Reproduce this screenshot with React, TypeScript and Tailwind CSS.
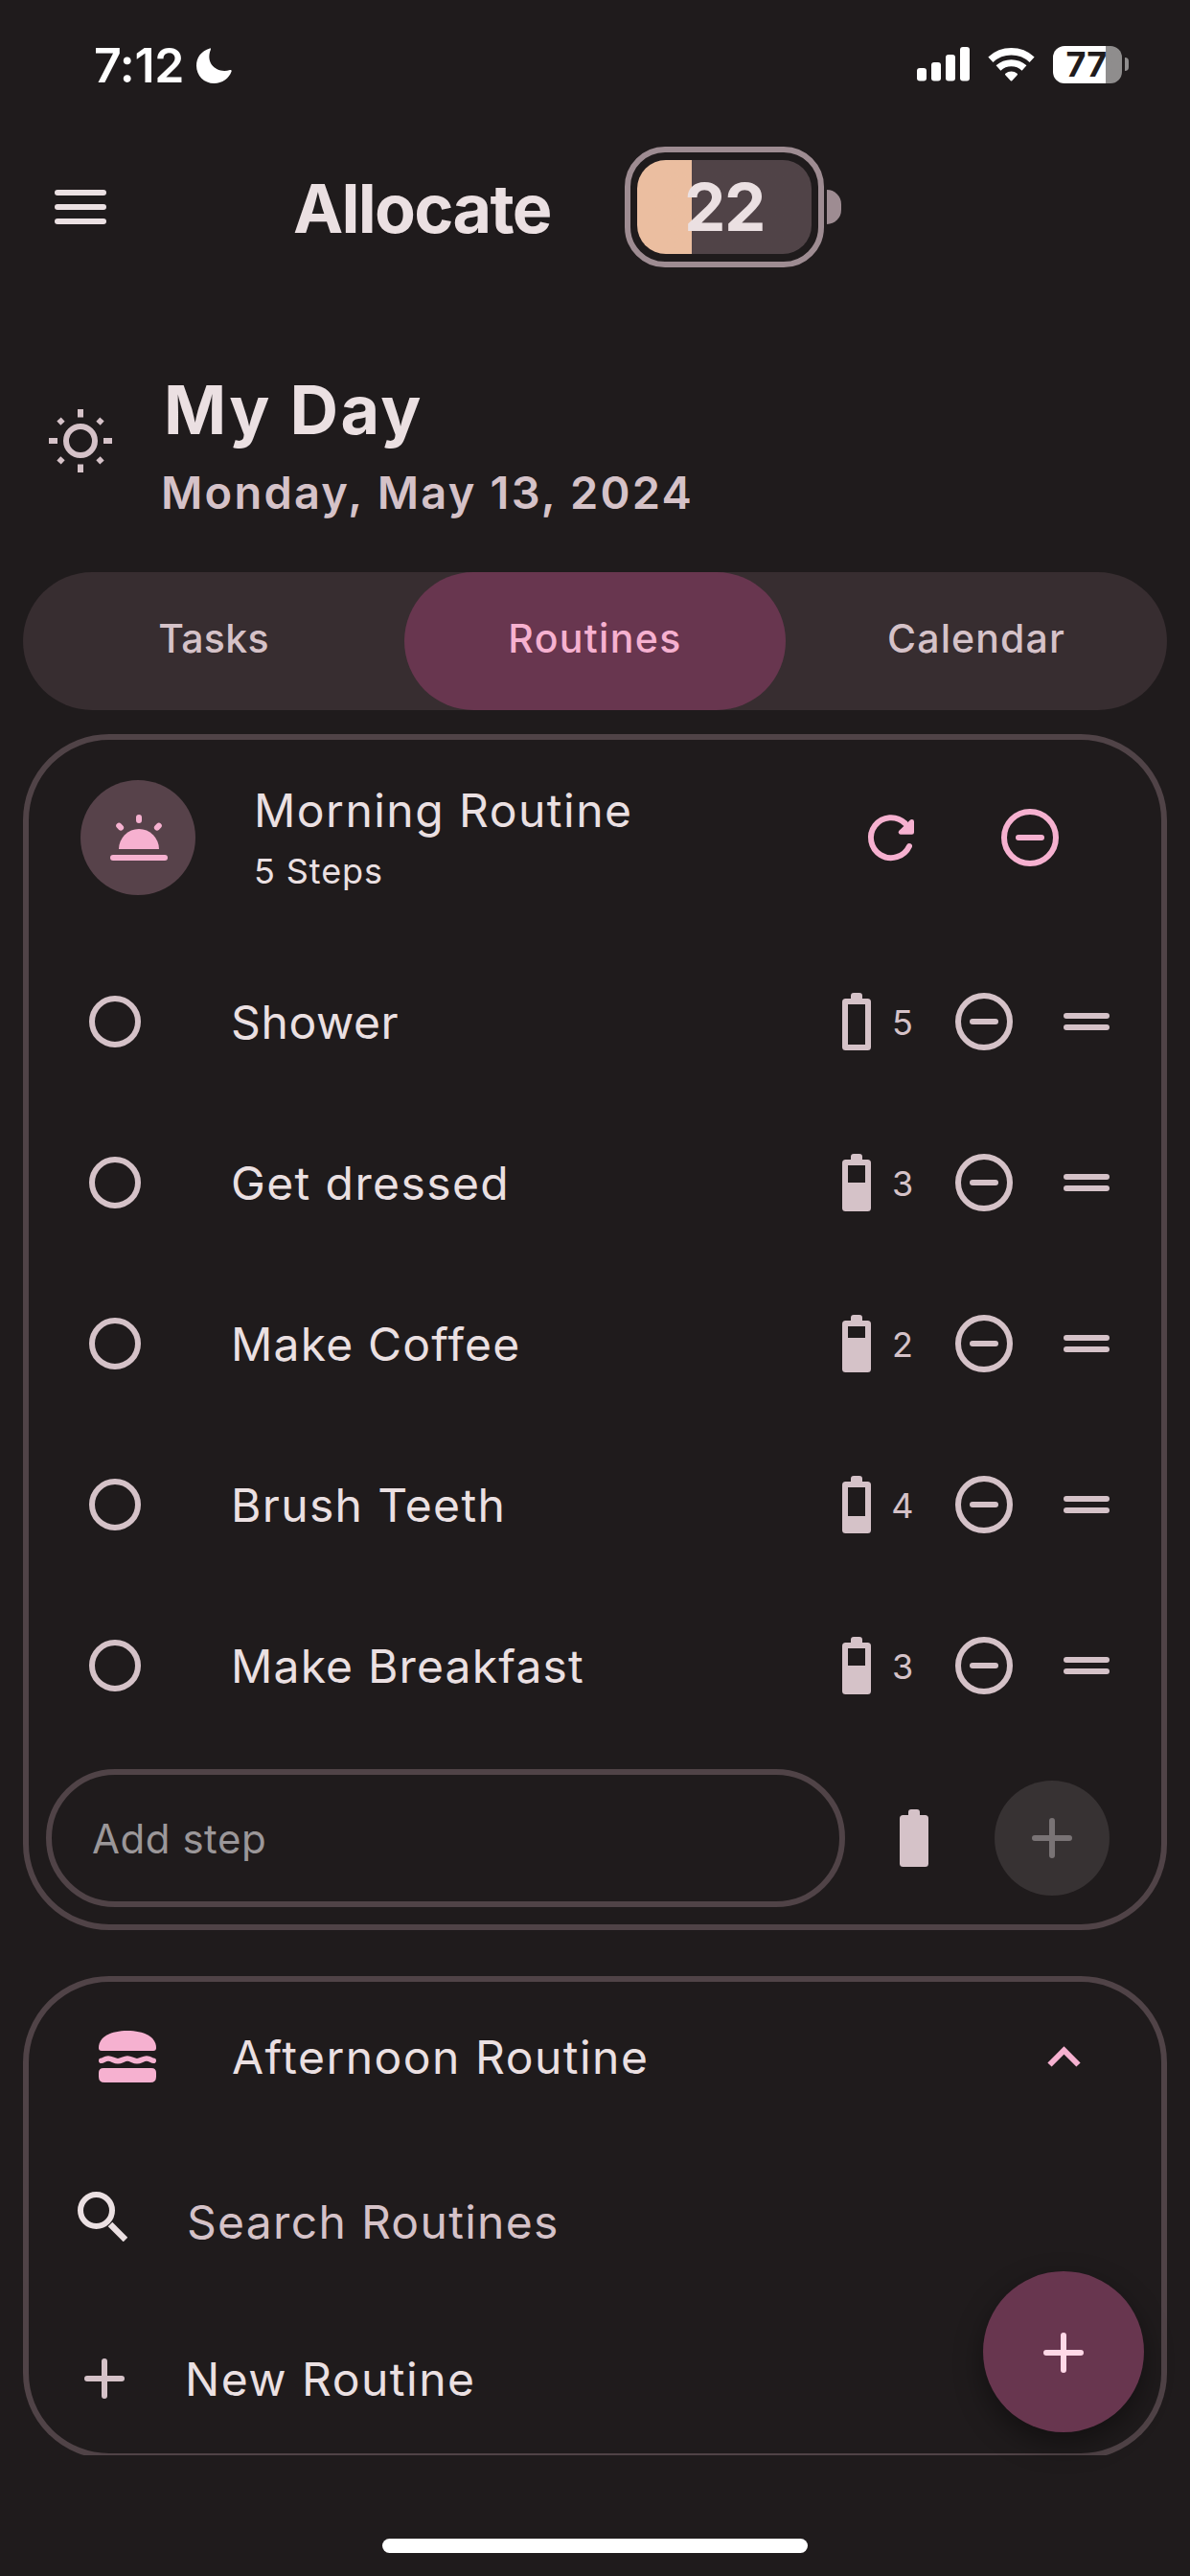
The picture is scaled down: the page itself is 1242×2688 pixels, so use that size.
import React from "react";

type Step = { label: string; tracking: string; energy: number; hollow: number };

const steps: Step[] = [
  { label: "Shower", tracking: "tracking-[0.6px]", energy: 5, hollow: 42 },
  { label: "Get dressed", tracking: "tracking-[1.4px]", energy: 3, hollow: 18 },
  { label: "Make Coffee", tracking: "tracking-[1.2px]", energy: 2, hollow: 12 },
  { label: "Brush Teeth", tracking: "tracking-[1.35px]", energy: 4, hollow: 30 },
  { label: "Make Breakfast", tracking: "tracking-[1.17px]", energy: 3, hollow: 18 },
];

const tabs = [
  { label: "Tasks", active: false, tracking: "tracking-[0.3px]" },
  { label: "Routines", active: true, tracking: "tracking-[1.36px]" },
  { label: "Calendar", active: false, tracking: "tracking-[1.13px]" },
];

function Moon() {
  return (
    <svg width="37" height="37" viewBox="0 0 37 37" className="ml-[14px]">
      <path
        d="M14 .4C5 3 0 10 0 18.5 0 29 8 37 18.5 37c8.500 0 15.500-5 18.100-12.500.4-1.200-.6-1.900-1.600-1.500C22 27 9 17 14.800 2c.5-1.200 0-2-.8-1.600Z"
        fill="#fff"
      />
    </svg>
  );
}

function Signal() {
  return (
    <svg width="56" height="36" viewBox="0 0 56 36" fill="#fff">
      <rect x="0" y="22" width="10" height="13.500" rx="3" />
      <rect x="15" y="16" width="10" height="19.500" rx="3" />
      <rect x="30" y="8" width="10" height="27.500" rx="3" />
      <rect x="45" y="0" width="10" height="35.500" rx="3" />
    </svg>
  );
}

function Wifi() {
  return (
    <svg width="49" height="37" viewBox="-1 0 49 37" fill="none" stroke="#fff">
      <path d="M1.900 13.200A32 32 0 0 1 45.100 13.200" strokeWidth="7.500" />
      <path d="M10 22A20 20 0 0 1 37 22" strokeWidth="7.200" />
      <path d="M23.500 34.500 18 28.600A8.500 8.500 0 0 1 29 28.600Z" fill="#fff" strokeWidth="2" strokeLinejoin="round" />
    </svg>
  );
}

function Sun() {
  return (
    <svg width="66" height="66" viewBox="0 0 66 66" fill="none" stroke="#d5c2c8" strokeWidth="6">
      <circle cx="33" cy="33" r="15" />
      <path d="M33 0v8.500M33 57.500V66M0 33h9M57 33h9M10.500 10.500l4 4.200M55.500 10.500l-4 4.200M10.500 55.500l4-4.200M55.500 55.500l-4-4.200" />
    </svg>
  );
}

function Sunrise() {
  return (
    <svg width="60" height="60" viewBox="0 0 60 60" className="ml-[2px]" fill="#f6b1d0">
      <rect x="0" y="48" width="60" height="6" rx="3" />
      <path d="M9 42a21 21 0 0 1 42 0Z" />
      <path d="M30 9v3M9.200 17.700l1.900 1.900M50.800 17.700l-1.900 1.900" stroke="#f6b1d0" strokeWidth="6" strokeLinecap="round" />
    </svg>
  );
}

function Refresh() {
  return (
    <svg width="60" height="60" viewBox="0 0 60 60" fill="none" stroke="#f6b1d0" strokeLinecap="round" strokeLinejoin="round">
      <path d="M44.500 15A21 21 0 1 0 49 39" strokeWidth="6" />
      <path d="M40 24.500h11.700V13.200Z" fill="#f6b1d0" strokeWidth="4.600" />
    </svg>
  );
}

function MinusCircle({ color }: { color: string }) {
  return (
    <svg width="60" height="60" viewBox="0 0 60 60" fill="none" stroke={color} strokeWidth="6" strokeLinecap="round">
      <circle cx="30" cy="30" r="27" />
      <path d="M18 30h24" />
    </svg>
  );
}

function Plus({ color }: { color: string }) {
  return (
    <svg width="42" height="42" viewBox="0 0 42 42" stroke={color} strokeWidth="6" strokeLinecap="round">
      <path d="M21 3v36M3 21h36" />
    </svg>
  );
}

function EnergyIcon({ hollow }: { hollow: number }) {
  return (
    <svg width="30" height="60" viewBox="0 0 30 60">
      <rect x="0" y="6" width="30" height="54" rx="3.500" fill="#d5c2c8" />
      <path d="M9 7V3q0-3 3-3h6q3 0 3 3v4Z" fill="#d5c2c8" />
      {hollow > 0 && <rect x="6" y="12" width="18" height={hollow} fill="#1f1b1c" />}
    </svg>
  );
}

function DragHandle() {
  return (
    <div className="flex w-12 flex-col gap-1.5">
      <div className="h-1.5 rounded-full bg-[#d5c2c8]" />
      <div className="h-1.5 rounded-full bg-[#d5c2c8]" />
    </div>
  );
}

function Burger() {
  return (
    <svg width="60" height="54" viewBox="0 0 60 54" fill="#f6b1d0">
      <path d="M0 18C0 6 13 0 30 0s30 6 30 18q0 3-3 3H3q-3 0-3-3Z" />
      <path
        d="M2.800 31.300C5 31.300 6 29 10 29s6 2.700 10 2.700S26 29 30 29s6 2.700 10 2.700S46 29 50 29s5 2.300 7.200 2.300"
        fill="none"
        stroke="#f6b1d0"
        strokeWidth="5.600"
        strokeLinecap="round"
      />
      <path d="M5 39h50q5 0 5 5v4q0 6-6 6H6q-6 0-6-6v-4q0-5 5-5Z" />
    </svg>
  );
}

function Magnifier() {
  return (
    <svg width="52" height="52" viewBox="0 0 52 52" className="mb-[4px]" fill="none" stroke="#ebe0e2" strokeWidth="6">
      <circle cx="19.500" cy="19.500" r="16.500" />
      <path d="M34 34l16 16" strokeWidth="6.500" />
    </svg>
  );
}

function StatusBar() {
  return (
    <div className="flex h-[134px] shrink-0 items-center justify-between pr-[64px] pl-[98px] text-white">
      <div className="flex items-center pt-[2px]">
        <span className="w-[93px] text-[50px] leading-[60px] font-semibold tracking-[-0.3px] whitespace-nowrap">7:12</span>
        <Moon />
      </div>
      <div className="flex items-center">
        <Signal />
        <div className="ml-[18px]">
          <Wifi />
        </div>
        <div className="ml-[19px] flex h-[39px] w-[72px] items-center justify-center rounded-[12px] bg-linear-to-r from-white from-[76%] to-[#8f8d8d] to-[76%] pr-[2px]">
          <span className="text-[36px] leading-[44px] font-bold tracking-[0.3px] text-[#1f1b1c]">77</span>
        </div>
        <div className="ml-[3px] h-[14px] w-[4px] rounded-r-full bg-[#8f8d8d]" />
      </div>
    </div>
  );
}

function Header() {
  return (
    <header className="flex h-[164px] shrink-0 items-center pl-[57px]">
      <div className="flex w-[54px] flex-col gap-[9px]">
        <div className="h-1.5 rounded-full bg-[#ebe0e2]" />
        <div className="h-1.5 rounded-full bg-[#ebe0e2]" />
        <div className="h-1.5 rounded-full bg-[#ebe0e2]" />
      </div>
      <h1 className="ml-[195px] w-[346px] pt-[3px] text-[70px] leading-[84px] font-bold tracking-[-1.7px] text-[#ebe0e2]">Allocate</h1>
      <div className="h-[126px] w-[208px] rounded-[42px] border-6 border-[#9e8c92] px-[7px] py-[8px]">
        <div className="flex h-[98px] items-center justify-center rounded-[30px] bg-linear-to-r from-[#ebbea0] from-[57px] to-[#504347] to-[57px]">
          <span className="text-[69px] leading-[84px] font-bold tracking-[-1.4px] text-[#ebe0e2]">22</span>
        </div>
      </div>
      <div className="ml-[3px] h-[36px] w-[15px] rounded-r-[15px] bg-[#9e8c92]" />
    </header>
  );
}

export default function App() {
  return (
    <div className="relative flex h-[2688px] w-[1242px] flex-col overflow-hidden bg-[#1f1b1c] font-['Inter',sans-serif] text-[#ebe0e2]">
      <StatusBar />
      <Header />

      <section className="flex h-[299px] shrink-0 pt-[87px] pl-[51px]">
        <div className="pt-[42px]">
          <Sun />
        </div>
        <div className="ml-[51px]">
          <h2 className="pl-[3px] text-[70px] leading-[85px] font-bold tracking-[2.3px]">My Day</h2>
          <p className="mt-[15px] text-[47px] leading-[58px] font-semibold tracking-[2.22px] text-[#d5c2c8]">Monday, May 13, 2024</p>
        </div>
      </section>

      <nav className="mx-6 flex h-[144px] shrink-0 rounded-full bg-[#372d30]">
        {tabs.map((t) => (
          <button
            key={t.label}
            className={`flex-1 rounded-full pb-[5px] text-[41px] font-medium ${t.tracking} ${
              t.active ? "bg-[#68364f] text-[#f6b1d0]" : "text-[#d5c2c8]"
            }`}
          >
            {t.label}
          </button>
        ))}
      </nav>

      <section className="mx-6 mt-[25px] h-[1248px] shrink-0 rounded-[90px] border-6 border-[#504347]">
        <div className="flex h-[210px] items-start pt-[42px] pl-[54px]">
          <div className="flex size-[120px] items-center justify-center rounded-full bg-[#57424a]">
            <Sunrise />
          </div>
          <div className="ml-[61px] w-[631px]">
            <h3 className="text-[48px] leading-[64px] tracking-[1.48px]">Morning Routine</h3>
            <p className="text-[36px] leading-[62px] tracking-[0.9px]">5 Steps</p>
          </div>
          <div className="mt-[30px] ml-[4px]">
            <Refresh />
          </div>
          <div className="mt-[30px] ml-[85px]">
            <MinusCircle color="#f6b1d0" />
          </div>
        </div>

        <ul>
          {steps.map((s) => (
            <li key={s.label} className="flex h-[168px] items-center pr-[54px] pl-[63px]">
              <div className="size-[54px] rounded-full border-6 border-[#d5c2c8]" />
              <span className={`ml-[94px] pt-[2px] text-[48px] leading-[60px] ${s.tracking}`}>{s.label}</span>
              <div className="ml-auto flex items-center">
                <EnergyIcon hollow={s.hollow} />
                <span className="ml-[21px] w-[24px] pt-[2px] text-center text-[36px] leading-[44px] text-[#d5c2c8]">{s.energy}</span>
                <div className="ml-[43px]">
                  <MinusCircle color="#d5c2c8" />
                </div>
                <div className="ml-[53px]">
                  <DragHandle />
                </div>
              </div>
            </li>
          ))}
        </ul>

        <div className="mt-6 flex items-center pl-[18px]">
          <div className="flex h-[144px] w-[834px] items-center rounded-full border-6 border-[#504347] pl-[42px] text-[42px] tracking-[0.54px] text-[#9b9799]">
            Add step
          </div>
          <div className="ml-[57px]">
            <EnergyIcon hollow={0} />
          </div>
          <div className="ml-[69px] flex size-[120px] items-center justify-center rounded-full bg-[#373233]">
            <Plus color="#797375" />
          </div>
        </div>
      </section>

      <div className="mx-6 mt-12 h-[500px] shrink-0 overflow-hidden">
        <section className="h-[504px] rounded-[90px] border-6 border-[#504347]">
          <div className="flex h-[156px] items-center pr-[84px] pl-[73px]">
            <Burger />
            <h3 className="ml-[79px] pt-[2px] text-[48px] leading-[60px] tracking-[1.49px]">Afternoon Routine</h3>
            <svg width="35" height="22" viewBox="0 0 35 22" className="ml-auto" fill="none" stroke="#f6b1d0" strokeWidth="6">
              <path d="M2.500 19.500 17.500 4.500 32.500 19.500" />
            </svg>
          </div>
          <div className="flex h-[182px] items-center pl-[51px]">
            <Magnifier />
            <span className="ml-[62px] pt-[8px] text-[48px] leading-[60px] tracking-[1.3px] text-[#d5c2c8]">Search Routines</span>
          </div>
          <div className="flex h-[152px] items-center pl-[58px]">
            <Plus color="#d5c2c8" />
            <span className="ml-[63px] pt-[2px] text-[48px] leading-[60px] tracking-[1.49px]">New Routine</span>
          </div>
        </section>
      </div>

      <div className="mx-auto mt-[87px] h-[15px] w-[444px] shrink-0 rounded-full bg-white" />

      <button className="absolute top-[2370px] left-[1026px] flex size-[168px] items-center justify-center rounded-full bg-[#68364f] pt-px shadow-[0_12px_30px_rgba(0,0,0,0.4)]">
        <Plus color="#ffd8e7" />
      </button>
    </div>
  );
}
